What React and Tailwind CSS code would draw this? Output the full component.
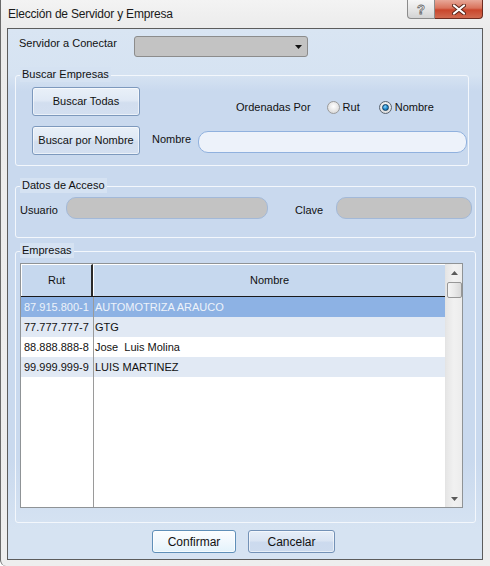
import React from "react";

const font = "font-['Liberation_Sans',Arial,sans-serif]";

const btnBlue =
  "border border-[#7d99bd] rounded-[3px] bg-[linear-gradient(180deg,#e9f0f8_0%,#e0e9f5_45%,#d2deef_55%,#d3dff0_100%)] shadow-[inset_0_0_0_1px_rgba(255,255,255,0.55)] text-[11px] text-[#111] flex items-center justify-center";

function Group({ label, className = "", children }) {
  return (
    <div className={`relative border border-[#f3f7fc] rounded-[3px] ${className}`}>
      <span className="absolute left-[4px] top-[-9px] h-[15px] px-[2px] bg-[#d5e2f2] leading-[15px] text-[11px] text-[#111]">
        {label}
      </span>
      {children}
    </div>
  );
}

function Radio({ checked }) {
  return (
    <span
      className={`w-[13px] h-[13px] rounded-full border flex items-center justify-center ${
        checked ? "border-[#5a6470]" : "border-[#9a9a9a]"
      } bg-[radial-gradient(circle_at_50%_40%,#ffffff_0%,#e6e6e6_55%,#cfcfcf_100%)]`}
    >
      {checked && (
        <span className="w-[7px] h-[7px] rounded-full border border-[#0d3c60] bg-[radial-gradient(circle_at_40%_35%,#8fd8ff_0%,#2a92d4_45%,#0b5e99_100%)]" />
      )}
    </span>
  );
}

function PillInput({ className = "" }) {
  return <div className={`rounded-[10px] border ${className}`} />;
}

export default function App() {
  const rows = [
    { rut: "87.915.800-1", nombre: "AUTOMOTRIZA ARAUCO", selected: true },
    { rut: "77.777.777-7", nombre: "GTG" },
    { rut: "88.888.888-8", nombre: "Jose  Luis Molina" },
    { rut: "99.999.999-9", nombre: "LUIS MARTINEZ" },
  ];
  const rowBg = ["bg-[#8db2e4]", "bg-[#e1e9f4]", "bg-white", "bg-[#e1e9f4]"];

  return (
    <div
      className={`${font} w-[490px] h-[566px] flex flex-col bg-[linear-gradient(180deg,#f3f3f3_0%,#ebebeb_30px,#eeeeee_100%)] border-l border-[#6a6a6a] rounded-bl-[6px] overflow-hidden`}
    >
      {/* title bar */}
      <div className="h-[28px] flex items-start shrink-0">
        <div className="pt-[7px] pl-[7px] text-[12px] leading-[14px] tracking-[-0.2px] text-[#1a1a1a]">
          Elección de Servidor y Empresa
        </div>
        <div className="ml-auto mr-[7px] flex">
          <div className="w-[28px] h-[19px] border border-t-0 border-[#8b8b8b] rounded-bl-[4px] bg-[linear-gradient(180deg,#f6f6f6_0%,#e6e6e6_50%,#d3d3d3_100%)] flex items-center justify-center">
            <span className="text-[13px] font-bold leading-none text-white [-webkit-text-stroke:0.8px_#6b6b6b]">
              ?
            </span>
          </div>
          <div className="w-[48px] h-[19px] border border-l-0 border-t-0 border-[#6e2b1f] rounded-br-[4px] bg-[linear-gradient(180deg,#e8a898_0%,#d9735c_45%,#c9462c_55%,#d06a50_100%)] flex items-center justify-center">
            <svg width="14" height="11" viewBox="0 0 14 11">
              <path
                d="M2 1.5 L12 9.5 M12 1.5 L2 9.5"
                stroke="#5a2418"
                strokeWidth="4"
                strokeLinecap="round"
              />
              <path
                d="M2 1.5 L12 9.5 M12 1.5 L2 9.5"
                stroke="#ffffff"
                strokeWidth="2.2"
                strokeLinecap="round"
              />
            </svg>
          </div>
        </div>
      </div>

      {/* client area */}
      <div className="ml-[6px] w-[476px] h-[532px] border border-[#5c5c5c] bg-[linear-gradient(180deg,#d9e5f3_0px,#d6e3f2_46px,#c9d9ee_62px,#c9d9ee_430px,#d6e3f2_500px)] flex flex-col text-[11px] text-[#111]">
        {/* servidor */}
        <div className="flex items-start pt-[7px] pl-[11px]">
          <div className="mt-[1px] leading-[13px] w-[115px]">Servidor a Conectar</div>
          <div className="w-[174px] h-[21px] rounded-[3px] border border-[#8c8c8c] bg-[#c3c3c3] flex items-center justify-end pr-[5px]">
            <svg width="7" height="4" viewBox="0 0 7 4">
              <path d="M0 0 H7 L3.5 4 Z" fill="#111" />
            </svg>
          </div>
        </div>

        {/* buscar empresas */}
        <Group label="Buscar Empresas" className="ml-[7px] mt-[18px] w-[454px] h-[91px]">
          <div className="pt-[11px] pl-[16px] flex flex-col gap-[10px]">
            <div className="flex items-start">
              <div className={`${btnBlue} w-[108px] h-[29px]`}>Buscar Todas</div>
              <div className="ml-[96px] mt-[14px] h-[13px] flex items-center">
                <span className="leading-[13px]">Ordenadas Por</span>
                <span className="ml-[16px]">
                  <Radio />
                </span>
                <span className="ml-[3px] leading-[13px]">Rut</span>
                <span className="ml-[19px]">
                  <Radio checked />
                </span>
                <span className="ml-[3px] leading-[13px]">Nombre</span>
              </div>
            </div>
            <div className="flex items-start">
              <div className={`${btnBlue} w-[108px] h-[29px]`}>Buscar por Nombre</div>
              <div className="ml-[12px] mt-[7px] leading-[13px] w-[46px]">Nombre</div>
              <PillInput className="mt-[5px] w-[269px] h-[22px] border-[#90b1de] bg-[#edf2fa]" />
            </div>
          </div>
        </Group>

        {/* datos de acceso */}
        <Group label="Datos de Acceso" className="ml-[7px] mt-[20px] w-[461px] h-[52px]">
          <div className="pt-[10px] pl-[4px] flex items-start">
            <div className="mt-[7px] leading-[13px] w-[46px]">Usuario</div>
            <PillInput className="w-[202px] h-[22px] border-[#a3b9d8] bg-[#c3c3c3]" />
            <div className="ml-[27px] mt-[7px] leading-[13px] w-[41px]">Clave</div>
            <PillInput className="w-[136px] h-[22px] border-[#a3b9d8] bg-[#c3c3c3]" />
          </div>
        </Group>

        {/* empresas */}
        <Group label="Empresas" className="ml-[7px] mt-[13px] w-[461px] h-[272px]">
          <div className="pt-[11px] pl-[4px]">
            <div className="w-[443px] h-[245px] border border-[#8f9396] bg-white flex">
              <div className="w-[424px] flex flex-col">
                {/* header */}
                <div className="h-[33px] flex border-b border-[#1a1a1a] bg-[#c6d8ee] shrink-0">
                  <div className="w-[72px] border-l border-t border-white border-r-2 border-r-[#2a2a2a] flex items-center justify-center">
                    Rut
                  </div>
                  <div className="flex-1 border-t border-l border-white flex items-center justify-center">
                    Nombre
                  </div>
                </div>
                {/* body */}
                <div className="flex-1 flex flex-col relative">
                  {rows.map((r, i) => (
                    <div
                      key={r.rut}
                      className={`h-[20px] flex items-center ${rowBg[i]} ${
                        r.selected ? "text-[#eef3fa]" : "text-[#111]"
                      }`}
                    >
                      <div className="w-[72px] pl-[3px] leading-[13px]">{r.rut}</div>
                      <div className="pl-[2px] leading-[13px] whitespace-pre">{r.nombre}</div>
                    </div>
                  ))}
                  <div className="flex-1 flex">
                    <div className="w-[72px]" />
                  </div>
                  <div className="absolute top-0 bottom-0 left-[72px] w-px bg-[#9a9a9a]" />
                </div>
              </div>
              {/* scrollbar */}
              <div className="w-[17px] border-l border-[#e4e4e4] bg-[linear-gradient(90deg,#e6e6e6_0%,#f1f1f1_50%,#ececec_100%)] flex flex-col items-center">
                <div className="h-[17px] flex items-center justify-center">
                  <svg width="7" height="4" viewBox="0 0 7 4">
                    <path d="M0 4 H7 L3.5 0 Z" fill="#5a5a5a" />
                  </svg>
                </div>
                <div className="mt-[1px] w-[15px] h-[16px] rounded-[2px] border border-[#979797] bg-[linear-gradient(90deg,#f5f5f5_0%,#e9e9e9_50%,#d9d9d9_100%)]" />
                <div className="flex-1" />
                <div className="h-[17px] flex items-center justify-center">
                  <svg width="7" height="4" viewBox="0 0 7 4">
                    <path d="M0 0 H7 L3.5 4 Z" fill="#5a5a5a" />
                  </svg>
                </div>
              </div>
            </div>
          </div>
        </Group>

        {/* bottom buttons */}
        <div className="mt-[7px] pl-[144px] flex gap-[12px]">
          <div className="w-[84px] h-[23px] rounded-[3px] border border-[#5f8fb8] bg-[linear-gradient(180deg,#fbfdff_0%,#f1f8fd_50%,#e3f3fb_100%)] shadow-[inset_0_0_0_1px_rgba(255,255,255,0.7)] flex items-center justify-center text-[12px]">
            Confirmar
          </div>
          <div className="w-[87px] h-[23px] rounded-[3px] border border-[#7391b6] bg-[linear-gradient(180deg,#e6eef8_0%,#dbe5f3_45%,#ccdaee_55%,#cddbee_100%)] shadow-[inset_0_0_0_1px_rgba(255,255,255,0.55)] flex items-center justify-center text-[12px]">
            Cancelar
          </div>
        </div>
      </div>
    </div>
  );
}
